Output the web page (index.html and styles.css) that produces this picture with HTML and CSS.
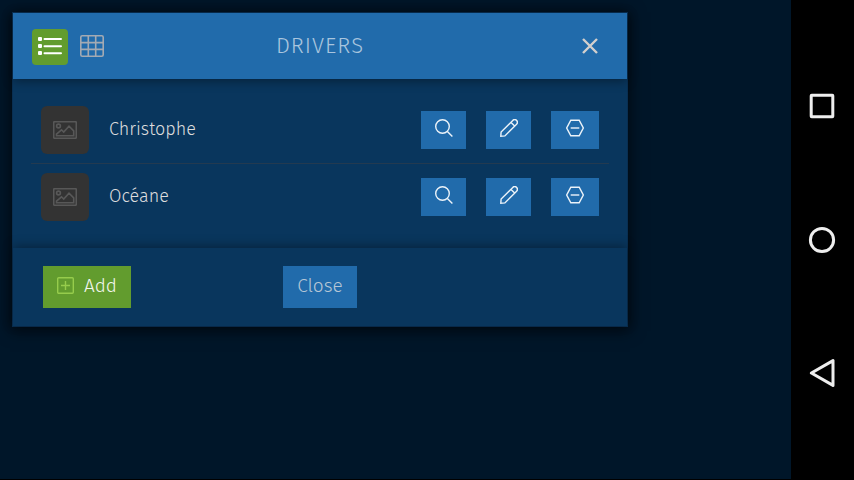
FILE: index.html
```html
<!DOCTYPE html>
<html lang="en">
<head>
  <meta charset="UTF-8">
  <meta name="viewport" content="width=device-width, initial-scale=1.0">
  <title>Drivers</title>
  <link rel="stylesheet" href="styles.css">
</head>
<body>
  <!-- Shared icons -->
  <svg class="icon-defs" aria-hidden="true">
    <symbol id="icon-image" viewBox="0 0 24 18">
      <rect x="0.7" y="0.7" width="22.6" height="16.6" rx="1"/>
      <circle cx="5.5" cy="5" r="1.9"/>
      <path d="M3.5 14.8v-1.6l5-4.4 2.2 2.2 5.3-5.8 4.7 4.7v4.9z"/>
    </symbol>
    <symbol id="icon-search" viewBox="0 0 18 18">
      <circle cx="7.5" cy="7.5" r="6.8"/>
      <path d="M12.4 12.4l5 5"/>
    </symbol>
    <symbol id="icon-edit" viewBox="0 0 18 18">
      <path d="M.8 17.2l.3-4.1L12.8 1.4a2.6 2.6 0 0 1 3.8 3.8L4.9 16.9z"/>
      <path d="M11 3.4l3.7 3.7"/>
    </symbol>
    <symbol id="icon-remove" viewBox="0 0 18 18">
      <path d="M4.8 1.2h8.4L17.3 9l-4.1 7.8H4.8L.7 9z"/>
      <path d="M4.7 9h8.6"/>
    </symbol>
  </svg>

  <main class="page">
    <section class="dialog" role="dialog" aria-labelledby="dialogTitle">
      <header class="dialog-header">
        <div class="view-switch">
          <button class="icon-button active" type="button" aria-label="List view">
            <svg width="24" height="18" viewBox="0 0 24 18">
              <g fill="#fff">
                <rect x="0" y="0" width="4" height="4" rx="1"/>
                <rect x="0" y="7" width="4" height="4" rx="1"/>
                <rect x="0" y="14" width="4" height="4" rx="1"/>
              </g>
              <path d="M6.5 2H23M6.5 9.3H23M6.5 16.3H23" stroke="#fff" stroke-width="2" stroke-linecap="round"/>
            </svg>
          </button>
          <button class="icon-button" type="button" aria-label="Grid view">
            <svg class="line-icon" width="24" height="22" viewBox="0 0 24 22">
              <rect x="0.8" y="0.8" width="22.4" height="20.4" rx="1.5"/>
              <path d="M8.3 1v20M15.7 1v20M1 7.6h22M1 14.4h22"/>
            </svg>
          </button>
        </div>
        <h1 class="dialog-title" id="dialogTitle">DRIVERS</h1>
        <button class="icon-button close-button" type="button" aria-label="Close dialog">
          <svg class="close-icon" width="16" height="16" viewBox="0 0 16 16">
            <path d="M1 1l14 14M15 1L1 15"/>
          </svg>
        </button>
      </header>

      <ul class="driver-list">
        <li class="driver">
          <span class="thumb"><svg width="24" height="18"><use href="#icon-image"/></svg></span>
          <span class="driver-name">Christophe</span>
          <div class="actions">
            <button class="action" type="button" aria-label="View Christophe"><svg width="18" height="18"><use href="#icon-search"/></svg></button>
            <button class="action" type="button" aria-label="Edit Christophe"><svg width="18" height="18"><use href="#icon-edit"/></svg></button>
            <button class="action remove" type="button" aria-label="Remove Christophe"><svg width="18" height="18"><use href="#icon-remove"/></svg></button>
          </div>
        </li>
        <li class="driver">
          <span class="thumb"><svg width="24" height="18"><use href="#icon-image"/></svg></span>
          <span class="driver-name">Océane</span>
          <div class="actions">
            <button class="action" type="button" aria-label="View Océane"><svg width="18" height="18"><use href="#icon-search"/></svg></button>
            <button class="action" type="button" aria-label="Edit Océane"><svg width="18" height="18"><use href="#icon-edit"/></svg></button>
            <button class="action remove" type="button" aria-label="Remove Océane"><svg width="18" height="18"><use href="#icon-remove"/></svg></button>
          </div>
        </li>
      </ul>

      <footer class="dialog-footer">
        <button class="button add" type="button">
          <svg width="17" height="17" viewBox="0 0 17 17">
            <rect x="0.7" y="0.7" width="15.6" height="15.6" rx="1"/>
            <path d="M8.5 4v9M4 8.5h9"/>
          </svg>
          Add
        </button>
        <button class="button" type="button">Close</button>
      </footer>
    </section>
  </main>

  <!-- Device navigation -->
  <nav class="device-nav" aria-label="Device">
    <button type="button" aria-label="Recent apps">
      <svg width="28" height="28" viewBox="0 0 28 28"><rect x="3.2" y="3.2" width="21.6" height="21.6" rx="0.5"/></svg>
    </button>
    <button type="button" aria-label="Home">
      <svg width="28" height="28" viewBox="0 0 28 28"><circle cx="14" cy="14" r="11.6"/></svg>
    </button>
    <button type="button" aria-label="Back">
      <svg width="28" height="28" viewBox="0 0 28 28"><path d="M25 1.6v24.8L3.4 14z"/></svg>
    </button>
  </nav>
</body>
</html>
```

FILE: styles.css
```css
* {
  box-sizing: border-box;
}

body {
  display: flex;
  min-height: 100vh;
  margin: 0;
  background: #000;
  color: #ddd;
  font-family: "Fira Sans", "Open Sans", "Noto Sans", sans-serif;
  font-size: 18px;
  font-weight: 300;
}

button {
  margin: 0;
  padding: 0;
  border: none;
  background: none;
  color: inherit;
  font: inherit;
  cursor: pointer;
}

svg {
  display: block;
  fill: none;
}

.icon-defs {
  position: absolute;
  width: 0;
  height: 0;
}

.page {
  flex: 1;
  margin-bottom: 1px;
  padding: 12px;
  background: #001629;
}

/* Dialog */
.dialog {
  max-width: 616px;
  border: 1px solid #092f52;
  background: #09365d;
  box-shadow: 0 2px 14px 2px rgba(0, 0, 0, 0.6);
}

.dialog-header {
  display: grid;
  grid-template-columns: 1fr auto 1fr;
  align-items: center;
  padding: 16px 19px 14px;
  background: #216bab;
  box-shadow: 0 2px 10px rgba(0, 0, 0, 0.4);
}

.view-switch {
  display: flex;
  gap: 6px;
}

.icon-button {
  display: flex;
  align-items: center;
  justify-content: center;
  width: 36px;
  height: 36px;
  padding-bottom: 2px;
  border-radius: 4px;
}

.icon-button.active {
  background: #629c2e;
}

.line-icon {
  stroke: #a3aab3;
  stroke-width: 1.6;
}

.dialog-title {
  margin: 0;
  padding-bottom: 2px;
  color: #a9c5de;
  font-size: 22px;
  font-weight: 300;
  line-height: 28px;
  letter-spacing: 1px;
}

.close-button {
  justify-self: end;
}

.close-icon {
  stroke: #d2cfcd;
  stroke-width: 2.4;
}

/* Driver rows */
.driver-list {
  margin: 0;
  padding: 18px;
  list-style: none;
}

.driver {
  display: flex;
  align-items: center;
  gap: 20px;
  padding: 9px 10px;
}

.driver + .driver {
  border-top: 1px solid #233a50;
}

.thumb {
  display: flex;
  align-items: center;
  justify-content: center;
  width: 48px;
  height: 48px;
  border-radius: 6px;
  background: #333;
  stroke: #585858;
  stroke-width: 1.6;
}

.driver-name {
  flex: 1;
  padding-bottom: 3px;
}

.actions {
  display: flex;
  gap: 20px;
}

.action {
  display: flex;
  align-items: center;
  justify-content: center;
  width: 45px;
  height: 38px;
  padding-bottom: 4px;
  background: #216bab;
  stroke: #ecf3f9;
  stroke-width: 1.4;
}

.action.remove {
  width: 48px;
}

/* Footer */
.dialog-footer {
  display: grid;
  grid-template-columns: 1fr auto 1fr;
  padding: 18px 30px;
  box-shadow: 0 -2px 10px rgba(0, 0, 0, 0.35);
}

.button {
  display: flex;
  align-items: center;
  gap: 10px;
  height: 42px;
  padding: 0 14px 3px;
  background: #216bab;
  color: #b5c6d6;
  font-size: 19px;
}

.button.add {
  justify-self: start;
  background: #629c2e;
  color: #f2f6ee;
}

.add svg {
  stroke: #96cc4c;
  stroke-width: 1.4;
}

/* Device navigation */
.device-nav {
  display: flex;
  flex-direction: column;
  align-items: center;
  justify-content: space-between;
  width: 63px;
  padding: 92px 1px 93px 0;
}

.device-nav svg {
  stroke: #eee;
  stroke-width: 3;
  stroke-linejoin: round;
}
```
